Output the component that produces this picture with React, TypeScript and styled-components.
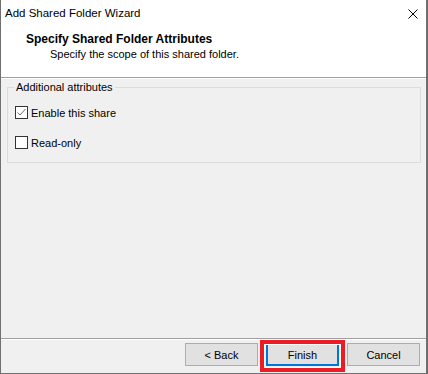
import styled, { createGlobalStyle } from 'styled-components';

const GlobalStyle = createGlobalStyle`
  html, body {
    margin: 0;
    padding: 0;
    background: #6b6b6b;
  }
  body {
    font-family: "Liberation Sans", Arial, sans-serif;
    font-size: 11px;
    color: #000;
  }
`;

const Window = styled.div`
  width: 427px;
  height: 374px;
  box-sizing: border-box;
  display: flex;
  flex-direction: column;
  background: #f0f0f0;
  border: 1px solid #707070;
  border-top: none;
`;

const TitleBar = styled.div`
  height: 30px;
  box-sizing: border-box;
  padding: 5px 0 0 4px;
  background: #fff;
  display: flex;
  align-items: flex-start;
  justify-content: space-between;
  font-size: 11.5px;
  line-height: 16px;
`;

const CloseButton = styled.div`
  width: 10px;
  height: 10px;
  margin: 4px 8px 0 0;
  display: flex;
`;

const Header = styled.div`
  background: #fff;
  padding: 2px 0 15px 25px;
  border-bottom: 1px solid #a0a0a0;
  box-shadow: 0 1px 0 #fff;
  margin-bottom: 1px;
  line-height: 15px;
`;

const HeaderTitle = styled.div`
  font-size: 12px;
  font-weight: bold;
`;

const HeaderSubtitle = styled.div`
  padding-left: 24px;
`;

const Body = styled.div`
  flex: 1;
  padding: 1px 5px 0 6px;
`;

const GroupBox = styled.fieldset`
  margin: 0;
  padding: 0 0 13px 6px;
  border: 1px solid #dcdcdc;
  display: flex;
  flex-direction: column;
  gap: 17px;
`;

const GroupLegend = styled.legend`
  padding: 0 2px;
  line-height: 14px;
  margin-bottom: 12px;
`;

const CheckRow = styled.label`
  display: flex;
  align-items: center;
  height: 13px;
  padding-left: 1px;
  gap: 3px;
`;

const Box = styled.span`
  width: 13px;
  height: 13px;
  box-sizing: border-box;
  border: 1px solid #333;
  background: #fff;
  display: flex;
  align-items: center;
  justify-content: center;
`;

const Footer = styled.div`
  border-top: 1px solid #a0a0a0;
  box-shadow: inset 0 1px 0 #fff;
  padding: 4px 6px 7px 0;
  display: flex;
  justify-content: flex-end;
  gap: 8px;
`;

const ButtonWrap = styled.div`
  position: relative;
  display: flex;
`;

const Button = styled.button<{ $default?: boolean }>`
  width: 73px;
  height: 23px;
  box-sizing: border-box;
  margin: 0;
  padding: 0;
  background: #e1e1e1;
  border: ${({ $default }) => ($default ? '2px solid #0078d7' : '1px solid #adadad')};
  font-family: "Liberation Sans", Arial, sans-serif;
  font-size: 11px;
  color: #000;
`;

const Highlight = styled.div`
  position: absolute;
  left: -6px;
  right: -6px;
  top: -3px;
  bottom: -6px;
  border: 4px solid #ed1c24;
  box-shadow: inset 0 0 0 1px #fff;
  pointer-events: none;
`;

type CheckProps = { label: string; checked?: boolean };

const Check = ({ label, checked }: CheckProps) => (
  <CheckRow>
    <Box>
      {checked && (
        <svg width="11" height="11" viewBox="0 0 11 11">
          <polyline points="1.5,5.5 4,8 9.5,2" fill="none" stroke="#6a6a6a" strokeWidth="1" />
        </svg>
      )}
    </Box>
    {label}
  </CheckRow>
);

const App = () => (
  <>
    <GlobalStyle />
    <Window>
      <TitleBar>
        Add Shared Folder Wizard
        <CloseButton>
          <svg width="10" height="10" viewBox="0 0 10 10">
            <path d="M0.5 0.5 L9.5 9.5 M9.5 0.5 L0.5 9.5" stroke="#000" strokeWidth="1" />
          </svg>
        </CloseButton>
      </TitleBar>
      <Header>
        <HeaderTitle>Specify Shared Folder Attributes</HeaderTitle>
        <HeaderSubtitle>Specify the scope of this shared folder.</HeaderSubtitle>
      </Header>
      <Body>
        <GroupBox>
          <GroupLegend>Additional attributes</GroupLegend>
          <Check label="Enable this share" checked />
          <Check label="Read-only" />
        </GroupBox>
      </Body>
      <Footer>
        <ButtonWrap>
          <Button>&lt; Back</Button>
        </ButtonWrap>
        <ButtonWrap>
          <Button $default>Finish</Button>
          <Highlight />
        </ButtonWrap>
        <ButtonWrap>
          <Button>Cancel</Button>
        </ButtonWrap>
      </Footer>
    </Window>
  </>
);

export default App;
